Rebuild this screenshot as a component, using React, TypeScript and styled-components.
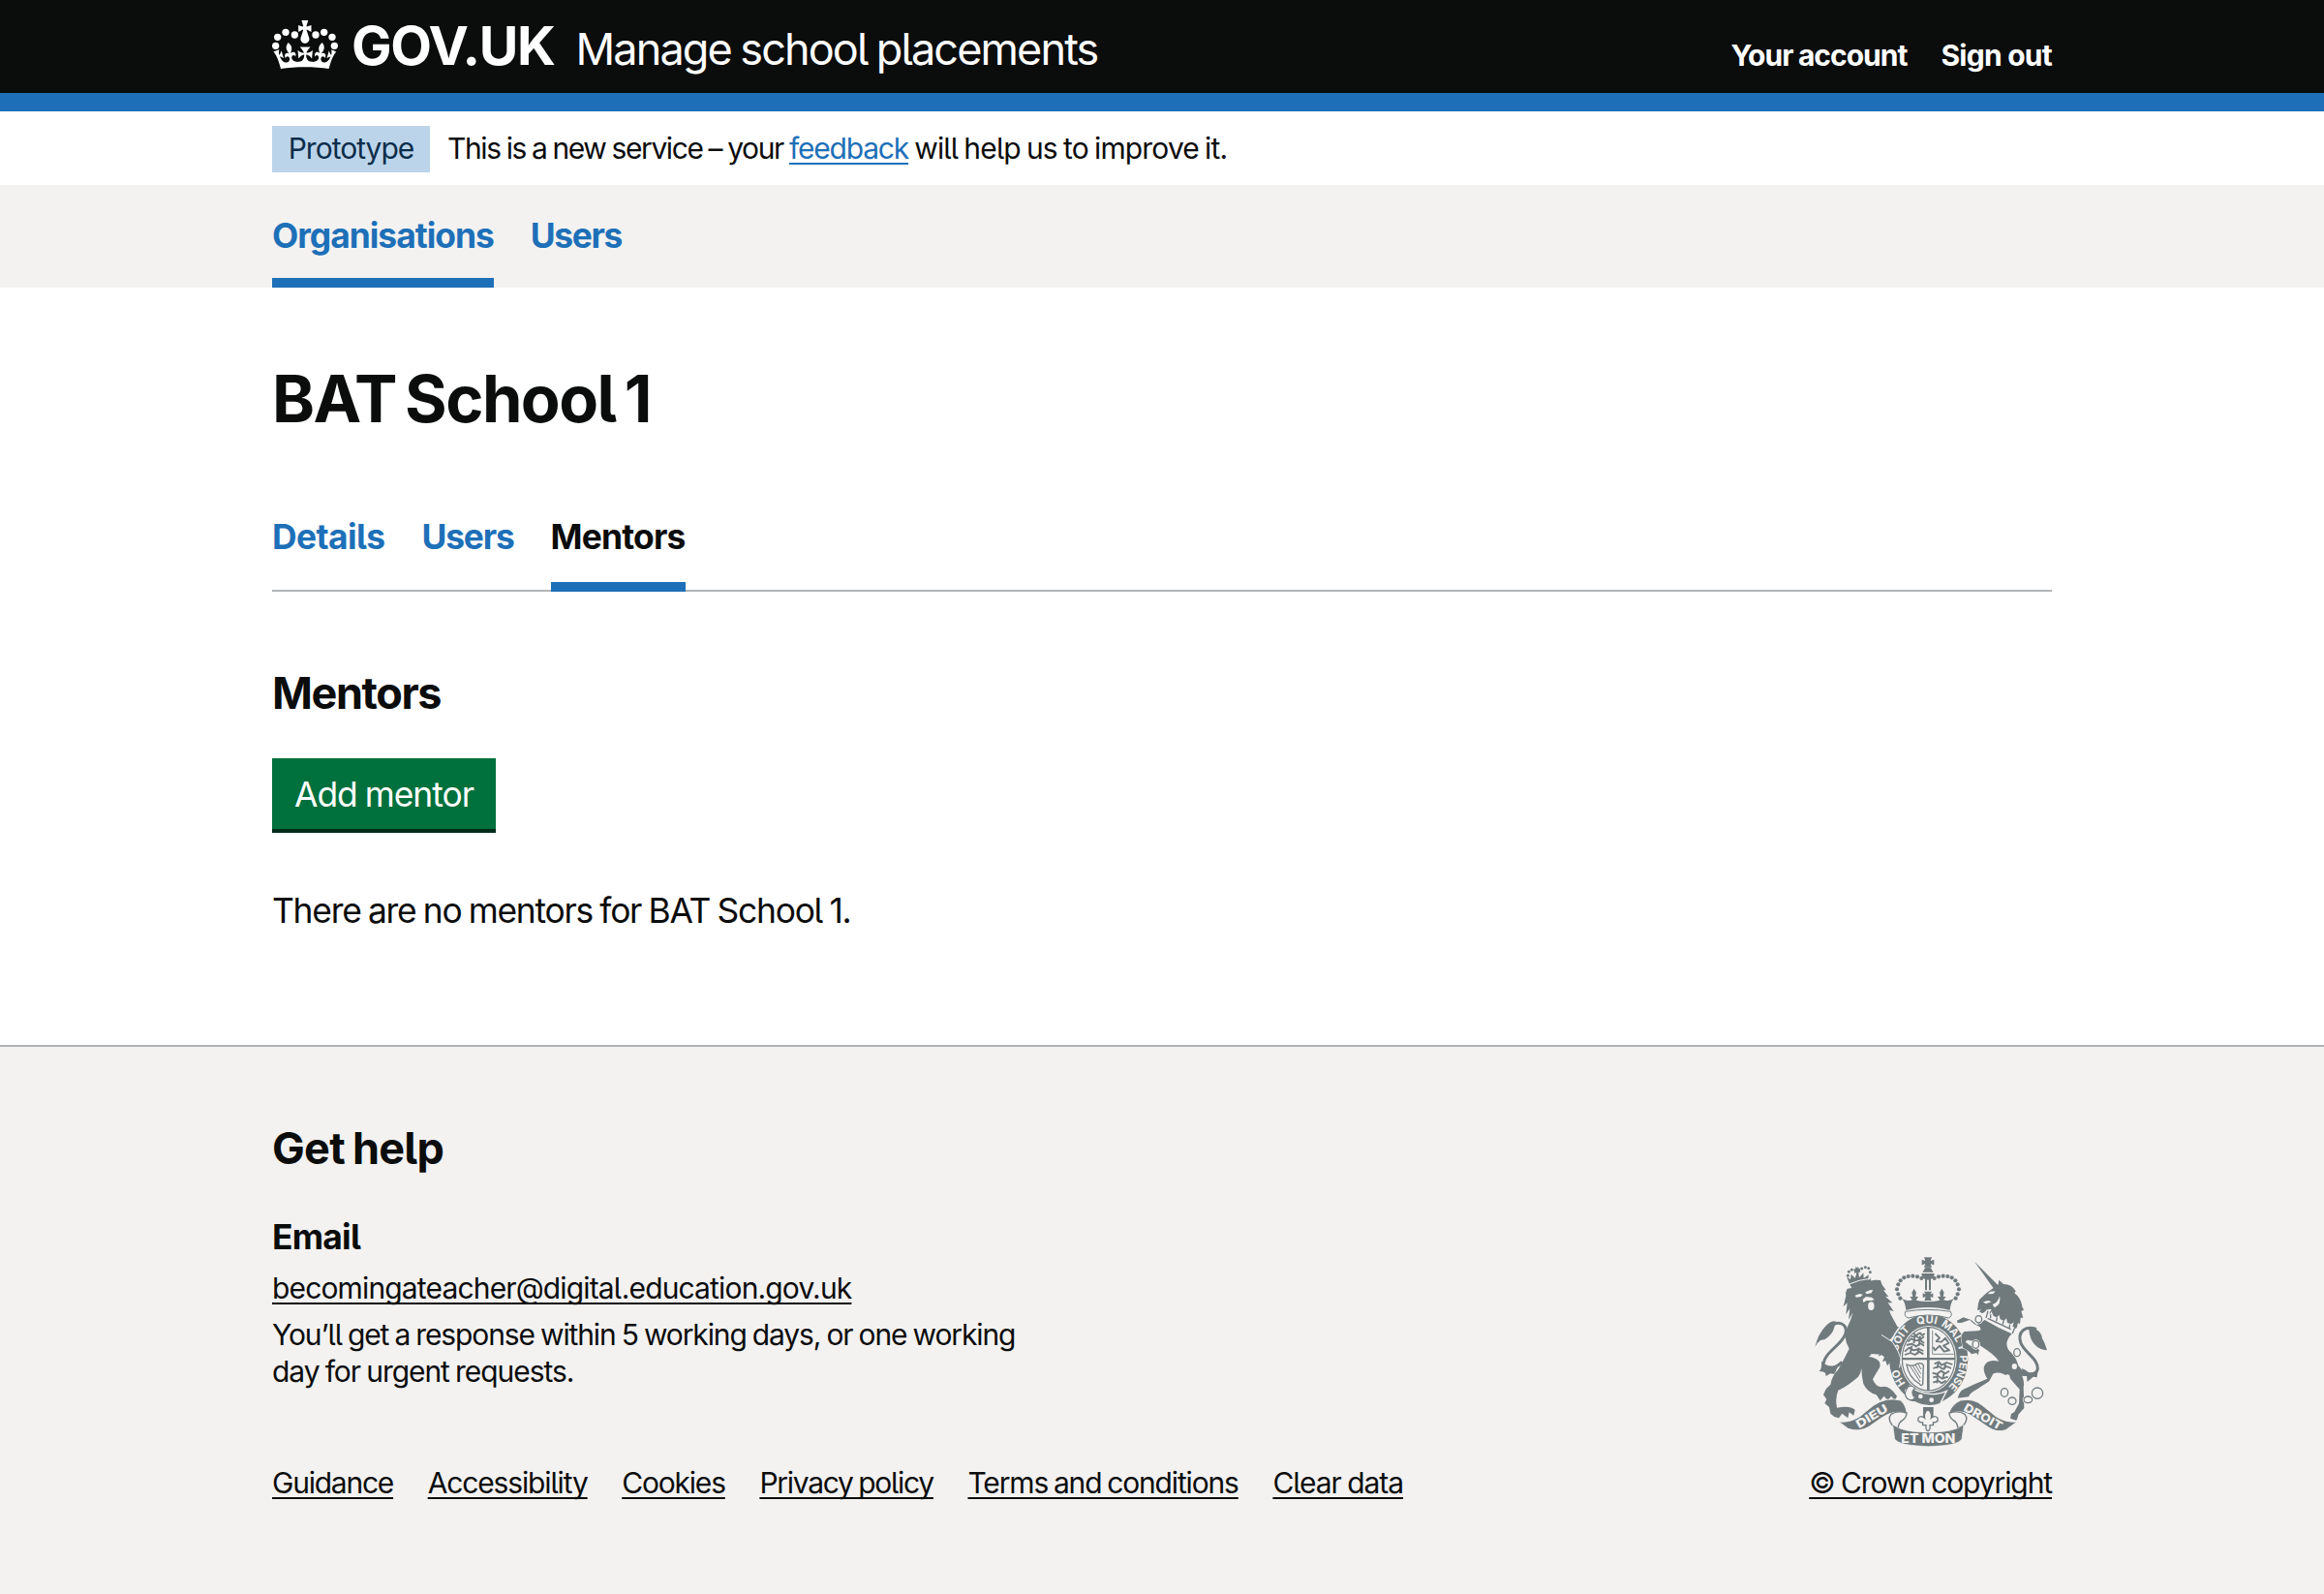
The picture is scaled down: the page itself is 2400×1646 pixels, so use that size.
import React from "react";
import styled, { createGlobalStyle } from "styled-components";

const colour = {
  ink: "#0b0c0c",
  blue: "#1d70b8",
  grey: "#f3f2f1",
  rule: "#b1b4b6",
  green: "#00703c",
  crest: "#707a7d",
};

const GlobalStyle = createGlobalStyle`
  html, body { margin: 0; padding: 0; background: #fff; }
  body {
    font-family: Inter, "Noto Sans", "Liberation Sans", Arial, sans-serif;
    font-feature-settings: "cv05" 1;
    color: ${colour.ink};
  }
  h1, h2, h3, p, ul { margin: 0; padding: 0; }
  ul { list-style: none; }
`;

type Tracking = { $track?: number; $word?: number };
const tracking = (p: Tracking) =>
  `letter-spacing: ${p.$track ?? 0}px; word-spacing: ${p.$word ?? 0}px;`;

const Page = styled.div`
  min-height: 1646px;
  display: flex;
  flex-direction: column;
`;
const Container = styled.div`
  width: 1838px;
  margin: 0 auto;
`;

/* Header */
const HeaderBar = styled.header`
  background: ${colour.ink};
  border-bottom: 19px solid ${colour.blue};
`;
const HeaderRow = styled(Container)`
  height: 96px;
  display: flex;
  align-items: flex-start;
  color: #fff;
`;
const CrownIcon = styled.svg`
  width: 69px;
  height: 52px;
  margin: 20px 13px 0 0;
`;
const Wordmark = styled.span<Tracking>`
  margin-top: 17px;
  font-size: 55.5px;
  line-height: 60px;
  font-weight: 700;
  ${tracking}
`;
const ServiceName = styled.span<Tracking>`
  margin: 27px auto 0 22px;
  font-size: 45px;
  line-height: 48px;
  ${tracking}
`;
const AccountNav = styled.nav`
  display: flex;
  gap: 35px;
  padding-top: 38px;
`;
const AccountLink = styled.a<Tracking>`
  font-size: 30px;
  line-height: 38px;
  font-weight: 700;
  white-space: nowrap;
  ${tracking}
`;

/* Phase banner */
const PhaseBanner = styled(Container)`
  height: 61px;
  padding-top: 15px;
  display: flex;
  gap: 18px;
  font-size: 30px;
  line-height: 46px;
`;
const PhaseTag = styled.strong<Tracking>`
  width: 163px;
  height: 48px;
  text-align: center;
  font-weight: 400;
  background: #bbd4ea;
  color: #0c2d4a;
  ${tracking}
`;
const PhaseText = styled.p`
  white-space: pre;
`;
const Run = styled.span<Tracking>`
  ${tracking}
`;

/* Links */
const TextLink = styled.a<Tracking & { $blue?: boolean }>`
  color: ${(p) => (p.$blue ? colour.blue : colour.ink)};
  text-decoration: underline;
  text-decoration-thickness: 2px;
  text-underline-offset: 4px;
  text-decoration-skip-ink: none;
  white-space: nowrap;
  ${tracking}
`;

/* Navigation */
const PrimaryBar = styled.div`
  background: ${colour.grey};
`;
const NavList = styled(Container)`
  display: flex;
  gap: 38px;
`;
const PrimaryItem = styled.a<Tracking & { $current?: boolean }>`
  box-sizing: border-box;
  height: 106px;
  padding-top: 29px;
  border-bottom: 10px solid ${(p) => (p.$current ? colour.blue : "transparent")};
  color: ${colour.blue};
  font-size: 35.4px;
  line-height: 48px;
  font-weight: 700;
  ${tracking}
`;
const TabList = styled.nav`
  display: flex;
  gap: 38px;
  height: 80px;
  margin-top: 80px;
  border-bottom: 2px solid ${colour.rule};
`;
const Tab = styled.a<Tracking & { $current?: boolean }>`
  box-sizing: border-box;
  height: 82px;
  padding-top: 2px;
  border-bottom: 10px solid ${(p) => (p.$current ? colour.blue : "transparent")};
  color: ${(p) => (p.$current ? colour.ink : colour.blue)};
  font-size: 35.4px;
  line-height: 48px;
  font-weight: 700;
  ${tracking}
`;

/* Main content */
const Main = styled(Container)`
  padding-top: 77px;
  padding-bottom: 114px;
`;
const Title = styled.h1<Tracking>`
  margin-bottom: -1px;
  font-size: 66.7px;
  line-height: 76px;
  ${tracking}
`;
const SectionHeading = styled.h2<Tracking>`
  font-size: 45px;
  line-height: 56px;
  ${tracking}
`;
const MentorsHeading = styled(SectionHeading)`
  margin-top: 77px;
`;
const AddButton = styled.button<Tracking>`
  display: block;
  width: 231px;
  height: 73px;
  margin: 39px 0 0;
  padding: 2px 0 0;
  border: 0;
  background: ${colour.green};
  box-shadow: 0 4px 0 #002d18;
  color: #fff;
  font: inherit;
  font-size: 35.4px;
  line-height: 71px;
  font-feature-settings: inherit;
  ${tracking}
`;
const Body = styled.p<Tracking>`
  margin-top: 61px;
  font-size: 35.4px;
  line-height: 48px;
  ${tracking}
`;

/* Footer */
const FooterBar = styled.footer`
  flex: 1;
  background: ${colour.grey};
  border-top: 2px solid ${colour.rule};
`;
const FooterRow = styled(Container)`
  display: flex;
  justify-content: space-between;
  align-items: flex-end;
  padding-top: 77px;
`;
const EmailHeading = styled.h3<Tracking>`
  margin-top: 40px;
  font-size: 35.4px;
  line-height: 48px;
  ${tracking}
`;
const FooterLine = styled.p<Tracking & { $gap?: number }>`
  margin-top: ${(p) => p.$gap ?? 0}px;
  font-size: 30px;
  line-height: 38px;
  white-space: nowrap;
  ${tracking}
`;
const FooterLinks = styled.ul`
  display: flex;
  gap: 35.6px;
  margin-top: 77px;
  font-size: 30px;
  line-height: 38px;
`;
const Copyright = styled.div`
  display: flex;
  flex-direction: column;
  align-items: flex-end;
  font-size: 30px;
  line-height: 38px;
`;
const CrestIcon = styled.svg`
  width: 242px;
  height: 198px;
  margin: 0 4.5px 17px 0;
`;

function Crown() {
  return (
    <CrownIcon viewBox="33 60 207 156" fill="#fff" aria-hidden="true">
      {[[44, 142], [50, 115], [75, 100], [103, 108], [168, 108], [194, 100], [219, 115], [226, 142]].map(([x, y]) => (
        <circle key={x} cx={x} cy={y} r="11" />
      ))}
      <g transform="translate(37.5 34) scale(6.06)">
        <path transform="translate(0 4.8)" d="M17 4.7l2.3 1.2V2.5l-2.3.7-.2-.2.9-3h-3.4l.9 3-.2.2c-.1.1-2.3-.7-2.3-.7v3.4L15 4.7c.1.1.1.2.2.2l-1.3 4c-.1.2-.1.4-.1.6 0 1.1.8 2 1.9 2.2h.7c1-.2 1.9-1.1 1.9-2.1 0-.2 0-.4-.1-.6l-1.3-4c-.1-.2 0-.2.1-.3" />
        <path d="M16 28.7c4.4 0 8.6.3 12.3.8 1.1-4.5 2.4-7 3.7-8.8l-2.5-.9c.2 1.3.3 1.9 0 2.7-.4-.4-.8-1.1-1.1-2.3l-1.2 4c.7-.5 1.3-.8 2-.9-1.1 2.5-2.6 3.1-3.5 3-1.1-.2-1.7-1.2-1.5-2.1.3-1.2 1.5-1.5 2.1-.1 1.1-2.3-.8-3-2-2.3 1.9-1.9 2.1-3.5.6-5.6-2.1 1.6-2.1 3.2-1.2 5.5-1.2-1.4-3.2-.6-2.5 1.6.9-1.4 2.1-.5 1.9.8-.2 1.1-1.7 2.1-3.5 1.9-2.7-.2-2.9-2.1-2.9-3.6.7-.1 1.9.5 2.9 1.9l.4-4.3c-1.1 1.1-2.1 1.4-3.2 1.4.4-1.2 2.1-3 2.1-3h-5.4s1.7 1.9 2.1 3c-1.1 0-2.1-.2-3.2-1.4l.4 4.3c1-1.4 2.2-2 2.9-1.9-.1 1.5-.2 3.4-2.9 3.6-1.9.2-3.4-.8-3.5-1.9-.2-1.3 1-2.2 1.9-.8.7-2.3-1.2-3-2.5-1.6.9-2.2.9-3.9-1.2-5.5-1.5 2-1.3 3.7.6 5.6-1.2-.7-3.1 0-2 2.3.6-1.4 1.8-1.1 2.1.1.2.9-.3 1.9-1.5 2.1-.9.2-2.4-.5-3.5-3 .6 0 1.2.3 2 .9l-1.2-4c-.3 1.1-.7 1.9-1.1 2.3-.3-.8-.2-1.4 0-2.7l-2.9.9c1.3 1.8 2.6 4.3 3.7 8.8 3.7-.5 7.9-.8 12.3-.8" />
      </g>
    </CrownIcon>
  );
}

const pearls = [[372, 103], [359, 98], [345, 96], [331, 97], [318, 101], [307, 110], [300, 122], [296, 137], [300, 152], [306, 165]];
const garterWords: [string, number][] = [["HO", 16.5], ["SOIT", 34.5], ["QUI", 49.2], ["MAL", 61.5], ["Y", 69.8], ["PENSE", 81.5]];
const links = [[549, 230, 10, 11], [540, 308, 10, 12], [668, 333, 10, 12], [629, 457, 11, 13], [653, 483, 12, 11], [702, 479, 13, 10], [731, 459, 17, 17]];

function Crest() {
  const bg = colour.grey;
  const fg = colour.crest;
  return (
    <CrestIcon viewBox="38 34 726 594" fill={fg} aria-hidden="true">
      {/* Royal crown */}
      <path d="M380 38h24l-4 11 11-4v17l-11-4 4 11h-24l4-11-11 4V45l11 4zM384 70h16l9 14h-34zM372 88h40q0 18-20 20-20-2-20-20z" />
      {pearls.map(([x, y]) => (
        <React.Fragment key={x + "-" + y}>
          <circle cx={x} cy={y} r="6.2" />
          <circle cx={784 - x} cy={y} r="6.2" />
        </React.Fragment>
      ))}
      <path d="M383 106h6v34h-6zM395 106h6v34h-6zM380 144h24l-5 9 9-4v14l-9-3 4 12h-22l4-12-9 3v-14l9 4z" />
      <path d="M310 164q10 10 24 8l10-2-8-10 9-1-3-12 7-12 7 12-3 12 9 1-7 11q16 4 37 4t37-4l-7-11 9-1-3-12 7-12 7 12-3 12 9 1-8 10 10 2q14 2 24-8-12 14-14 38-30-9-68-9t-68 9q-2-24-14-38z" />

      {/* Lion */}
      <path d="M148 118l-8-20 12 9 2-17 12 12 6-16 8 14 12-14 1 17 15-11-1 18 9-10-2 18q-30 4-58 16z" />
      {[[144, 95], [147, 83], [156, 77], [167, 79], [187, 73], [198, 69], [208, 72], [213, 84]].map(([x, y]) => (
        <circle key={x} cx={x} cy={y} r="4.4" />
      ))}
      <path d="M168 66l5 5 3-4 2 7 6-2-3 7 3 4-7 2 1 10-6 1-2-10-7 1 3-7-5-5 7-1z" />
      <path d="M137 148l5-13 18-3q30-20 68-24l17 1 5 14 12 17-8 0 16 20-10-1 22 20-14 0 18 26-14-3q4 14 12 26l14 26 8 0-16 22-18 20q-6 22 16 30l16 16 12 28-6 22-8-12-8 14-8-16-10 12-8-18 10-4-6-12-21 5 6-14-10-8-30-2q-2 4-8 9 40 6 34 32-14 22-22 38 8 22 26 24 24-8 49 28l-6 14-12-14-10 14-12-14-12 14-12-18q-28-8-40-34-6-26-6-48-2 16-10 26-34 30-62 42-10 26-4 54 40-8 56 6l-4 18-14-10-4 18-18-14-10 14-14-4-12-10-4-20-14-12 6-12-10-14 8-18 14-14q4-26 24-46 20-36 34-65-20-34-6-66 12-24 18-46l-14 22 4-34-12 18 4-36-12 12 8-34z" />
      <path d="M148 121q30-14 66-17" stroke={bg} strokeWidth="3" fill="none" />
      <path d="M166 156l14-5 10 2-6 7-14 2zM198 146l16-7 8 1-6 9-14 3zM190 168l10-8 18 2 8 8-10 2-14 0-10 6z" fill={bg} />
      <ellipse cx="216" cy="189" rx="9.5" ry="13" fill={bg} />
      <path d="M82 262c22-34 66-22 54 14-12 34-64 56-68 92 0 24 30 20 58-6" fill="none" stroke={fg} strokeWidth="9" />
      <path d="M42 316q10-42 34-66 14-16 30-14-4 34-22 48-12 12-24 10-12 8-18 22zM62 360q2 26-8 30 16 2 20 6l2 10 14-8 12 2 14-30q-34 12-54-10z" />

      {/* Garter and shield */}
      <ellipse cx="394" cy="353" rx="127" ry="144" fill={bg} />
      <ellipse cx="394" cy="353" rx="122" ry="139" />
      <path d="M322 206q70-12 140 0 8 14-6 20-62-18-124 0-16-4-10-20z" fill={bg} stroke={fg} strokeWidth="3" />
      <ellipse cx="394" cy="353" rx="87" ry="103" fill={bg} />
      <ellipse cx="394" cy="353" rx="82" ry="98" fill="none" stroke={fg} strokeWidth="3.5" />
      <path d="M389 255h8v196h-8zM312 349h164v7H312z" />
      <g fill="none" stroke={fg} strokeWidth="5.5" strokeLinejoin="round">
        <path d="M346 272l8 8 14-8 6 8 8-6M340 284l16-2 12 10 12-8M330 300l10-10 14 6 14-2 12 10M326 310l16-4 14 8 12-10 12 8M320 330l14-12 14 8 16-4 14 6M320 340l18-6 14 6 12-10 14 8M352 280l-4 24M368 282l-4 30M342 312l-4 20M364 318l-4 20" />
        <path d="M412 368l14-6 8 10 16-8 18 6M408 382l18-6 12 8 12-8 14 6M406 396l14 4 12-10 14 8 12-8M408 410l16-4 12 8 18-6M408 426l16-6 10 8 14-8M424 366l-4 16M446 368l-4 18M424 394l-4 18M442 396l-4 16M422 412l-2 16" />
        <path d="M414 274l14 14-10 10 16 2 12-12 10 16-16 8 18 14-16 4-14-18-14 14-6-10" />
      </g>
      <path d="M406 264v74h66" fill="none" stroke={fg} strokeWidth="2.5" />
      <g fill="none" stroke={fg} strokeWidth="4">
        <path d="M326 370q20 8 32-2 14-6 20 4l-2 58q-4 10-10 0-34-20-40-60z" />
        <path d="M336 374l32 50M345 374l24 38M353 371l17 28M361 368l10 17" strokeWidth="3" />
      </g>
      <defs>
        <path id="garter" d="M394 464A97 111 0 0 1 394 242A97 111 0 0 1 394 464" />
      </defs>
      {garterWords.map(([word, at]) => (
        <text key={word} fill={bg} fontSize="33" fontWeight="700" textAnchor="middle">
          <textPath href="#garter" startOffset={at + "%"}>{word}</textPath>
        </text>
      ))}
      <path d="M322 450l14-14q22 22 66 26 26 0 48-10l-20 40q-40 14-80-6-16 2-28-14z" stroke={bg} strokeWidth="4" />
      <path d="M330 440q12-8 22 4-10 6-8 16 2 8 8 12-10 14-24 4-14-16 2-36z" fill={bg} stroke={fg} strokeWidth="3.5" />
      <circle cx="369" cy="469" r="7" fill={bg} />
      <circle cx="403" cy="480" r="7" fill={bg} />

      {/* Lion's forepaw, resting on the garter */}
      <path d="M252 282l30 18 16 28 9 24-4 28-11-16-6 14-10-16-10 12-8-24 10-2-6-14-24 11 8-15-22-10z" />
      <path d="M248 278l34 22 17 28 9 24-4 28" fill="none" stroke={bg} strokeWidth="3" />

      {/* Unicorn */}
      <path d="M536 51l72 72-12 12zM548 180l4-12 22-20 22-16 14-10 2-14 14 13q26 0 38 22l-4 6q20 14 24 42l5 10-8 4 6 20-8 0-2 20-6-4q-2 12-6 18-40-8-84-42 2-10 8-18-18-2-19 7l-10 6-9-6 6-6-12 2z" />
      <path d="M577 152l8-8 16-1-7 8zM563 176l16-4 10 4-18 6zM592 184q18-6 22-26 6 26-16 36z" fill={bg} />
      <path d="M574 206l10 8 5-8 6 14 11 4 6-8 4 14 12 5 7-8 3 14 12 4 8-6-4 14 9 2-10 20-82-38z" fill={bg} />
      <path d="M577 227l72 34M578 204l-6 22M586 215l0 12M606 224l-2 12M626 234l-2 12M646 246l-2 12M662 252l-8 22" stroke={fg} strokeWidth="4" />
      <path
        d="M568 232Q608 256 652 275Q638 289 636 305Q636 323 650 333Q666 349 672 373L688 393L684 405Q692 427 688 440L690 505L672 525Q670 539 665 543L647 537L650 523L660 517L674 491L676 447L646 413Q624 393 602 396Q594 396 592 402L582 422L542 448Q524 456 518 470L484 474Q490 452 504 446L530 434L576 414Q562 392 566 376Q574 352 612 360Q600 340 555 312L548 300L514 294L508 300L524 312L540 312L551 326L546 342L543 334L528 338L514 326L500 318L495 288Q495 276 504 268L548 266L556 262L552 252Q534 248 522 232L498 240L484 242L482 234L502 224L526 232L544 248Z"
        stroke={bg}
        strokeWidth="3"
        paintOrder="stroke"
      />
      {[[660, 376], [638, 410]].map(([x, y]) => (
        <ellipse key={x} cx={x} cy={y} rx="8" ry="9" fill={bg} />
      ))}
      {links.map(([x, y, rx, ry]) => (
        <g key={x} fill={bg} stroke={bg} strokeWidth="8">
          <ellipse cx={x} cy={y} rx={rx} ry={ry} />
          <ellipse cx={x} cy={y} rx={rx} ry={ry} stroke={fg} strokeWidth="3.8" />
        </g>
      ))}
      <path d="M728 260c-36-12-60 10-48 44 12 30 54 48 52 80-4 18-26 22-44 4" fill="none" stroke={fg} strokeWidth="9" />
      <path d="M704 258q38-2 42 32 6 8 15 36-50-6-56-62zM684 380l14 18 34-6-2 18-12-2-18 16-2-18-14 0z" />

      {/* Motto scroll */}
      <path d="M115 547q34 4 66-16l42-34q40-28 84-16 16 12 20 40-40-12-78 14l-40 28q-30 18-64 6z" stroke={bg} strokeWidth="3" />
      <path d="M669 547q-34 4-66-16l-42-34q-28-24-68-16-28 12-36 40 40-12 70 8l50 34q28 20 56 10z" stroke={bg} strokeWidth="3" />
      <path d="M326 520q-30-8-48 4-12 14 2 32 6 8 20 10 0-16 14-24 12-8 12-22z" fill={bg} stroke={fg} strokeWidth="4" />
      <path d="M458 520q30-8 48 4 12 14-2 32-6 8-20 10 0-16-14-24-12-8-12-22z" fill={bg} stroke={fg} strokeWidth="4" />
      <path d="M283 556q30 24 111 24t109-24l-6 46q-14 20-103 22-89-2-105-22z" stroke={bg} strokeWidth="2" />
      <path d="M377 502h32v30h-32z" />
      <path d="M392 508q14 14 10 28 12-10 20 0 4 14-14 14l0 8-10 0q2 16-6 18-8-2-6-18l-10 0 0-8q-18 0-14-14 8-10 20 0-4-14 10-28z" fill={bg} stroke={fg} strokeWidth="4" />
      <g fill={bg} fontWeight="800" fontSize="36">
        <text x="309" y="613" textLength="168" fontSize="40" lengthAdjust="spacingAndGlyphs">ET MON</text>
        <text transform="translate(178 569) rotate(-31)" textLength="108" lengthAdjust="spacingAndGlyphs">DIEU</text>
        <text transform="translate(500 511) rotate(29)" textLength="130" lengthAdjust="spacingAndGlyphs">DROIT</text>
      </g>
    </CrestIcon>
  );
}

const footerLinks: [string, number, number][] = [
  ["Guidance", -1.24, 0],
  ["Accessibility", -1.14, 0],
  ["Cookies", -1.2, 0],
  ["Privacy policy", -1.28, -1.5],
  ["Terms and conditions", -1.15, -1.5],
  ["Clear data", -1.05, -1],
];

export default function App() {
  return (
    <Page>
      <GlobalStyle />
      <HeaderBar>
        <HeaderRow>
          <Crown />
          <Wordmark $track={-1.3}>GOV.UK</Wordmark>
          <ServiceName $track={-1.87} $word={-1.5}>Manage school placements</ServiceName>
          <AccountNav>
            <AccountLink $track={-1} $word={-0.5}>Your account</AccountLink>
            <AccountLink $track={-0.75}>Sign out</AccountLink>
          </AccountNav>
        </HeaderRow>
      </HeaderBar>
      <PhaseBanner>
        <PhaseTag $track={-1}>Prototype</PhaseTag>
        <PhaseText>
          <Run $track={-1.4} $word={-1}>{"This is a new service – your "}</Run>
          <TextLink $blue $track={-1.2}>feedback</TextLink>
          <Run $track={-0.83} $word={-1.5}>{" will help us to improve it."}</Run>
        </PhaseText>
      </PhaseBanner>
      <PrimaryBar>
        <NavList as="nav">
          <PrimaryItem $current $track={-1}>Organisations</PrimaryItem>
          <PrimaryItem $track={-1.4}>Users</PrimaryItem>
        </NavList>
      </PrimaryBar>
      <Main as="main">
        <Title $track={-1.55} $word={-5}>BAT School 1</Title>
        <TabList>
          <Tab $track={-0.6}>Details</Tab>
          <Tab $track={-1.2}>Users</Tab>
          <Tab $current $track={-0.8}>Mentors</Tab>
        </TabList>
        <MentorsHeading $track={-1.4}>Mentors</MentorsHeading>
        <AddButton $track={-1} $word={-1}>Add mentor</AddButton>
        <Body $track={-1.24} $word={-1.4}>There are no mentors for BAT School 1.</Body>
      </Main>
      <FooterBar>
        <FooterRow>
          <div>
            <SectionHeading $track={-0.7} $word={-2}>Get help</SectionHeading>
            <EmailHeading $track={-0.75}>Email</EmailHeading>
            <FooterLine $gap={9}>
              <TextLink $track={-0.85}>becomingateacher@digital.education.gov.uk</TextLink>
            </FooterLine>
            <FooterLine $gap={10} $track={-1.12} $word={-1.2}>You’ll get a response within 5 working days, or one working</FooterLine>
            <FooterLine $track={-1.05} $word={-1.2}>day for urgent requests.</FooterLine>
            <FooterLinks>
              {footerLinks.map(([label, track, word]) => (
                <li key={label}>
                  <TextLink $track={track} $word={word}>{label}</TextLink>
                </li>
              ))}
            </FooterLinks>
          </div>
          <Copyright>
            <Crest />
            <TextLink $track={-1.1} $word={-1}>© Crown copyright</TextLink>
          </Copyright>
        </FooterRow>
      </FooterBar>
    </Page>
  );
}
